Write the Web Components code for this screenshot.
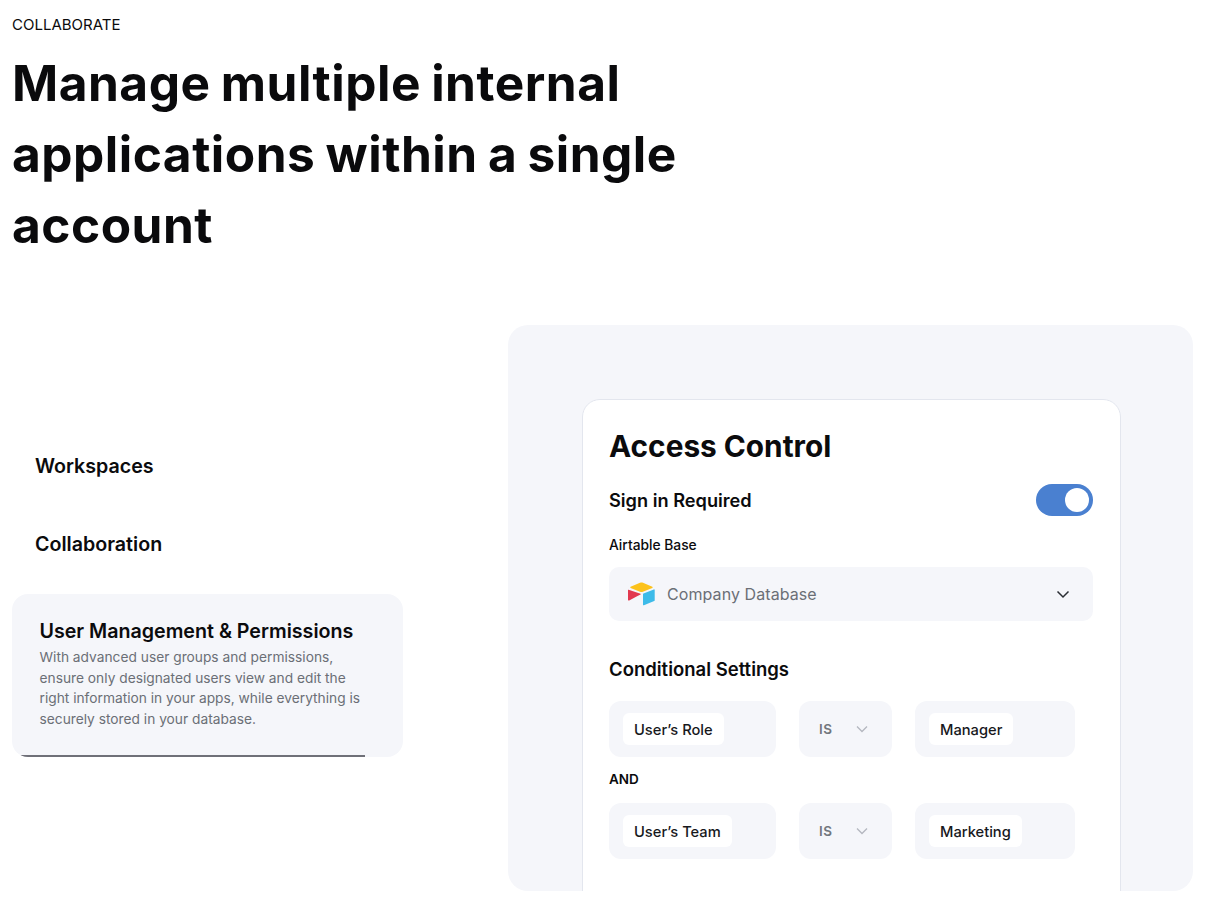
<!DOCTYPE html>
<html lang="en"><head><meta charset="utf-8"><title>Collaborate</title>
<style>
html,body{margin:0;background:#fff;font-family:Inter,"Liberation Sans",sans-serif;color:#0b0b0d}
body{width:1215px;height:901px;overflow:hidden}
</style></head><body>
<feature-page>
  <section-head slot="head" eyebrow="COLLABORATE">Manage multiple internal applications within a single account</section-head>
  <tab-list slot="tabs">
    <tab-item label="Workspaces"></tab-item>
    <tab-item label="Collaboration"></tab-item>
    <tab-item label="User Management &amp; Permissions" active>With advanced user groups and permissions, ensure only designated users view and edit the right information in your apps, while everything is securely stored in your database.</tab-item>
  </tab-list>
  <demo-panel slot="panel">
    <access-card>
      <toggle-row label="Sign in Required"></toggle-row>
      <base-select label="Airtable Base" value="Company Database"></base-select>
      <cond-settings>
        <cond-row field="User’s Role" value="Manager"></cond-row>
        <div class="and" style="font:600 13.5px/20px Inter,sans-serif;margin:12px 0 14px;color:#0b0b0d">AND</div>
        <cond-row field="User’s Team" value="Marketing"></cond-row>
      </cond-settings>
    </access-card>
  </demo-panel>
</feature-page>
<script>
function def(name, html){
  customElements.define(name, class extends HTMLElement{
    connectedCallback(){
      if(this.shadowRoot) return;
      const r=this.attachShadow({mode:'open'});
      const a=n=>(this.getAttribute(n)||'').replace(/&/g,'&amp;');
      r.innerHTML=typeof html==='function'?html(a,this):html;
    }
  });
}
def('feature-page',`<style>
:host{display:block;padding:14px 22px 0 12px}
.row{display:flex;margin-top:64px}
.l{width:391px;padding-top:113px;flex:none}
.r{margin-left:105px;flex:none}
</style><slot name="head"></slot><div class="row"><div class="l"><slot name="tabs"></slot></div><div class="r"><slot name="panel"></slot></div></div>`);
def('section-head',a=>`<style>
:host{display:block}
.e{font:400 15px/22px Inter,sans-serif;color:#0b0b0d}
h1{margin:12px 0 0;font:650 49.600px/71px Inter,sans-serif;letter-spacing:.5px;word-spacing:-2px;width:680px;color:#0a0a0c}
</style><div class="e">${a('eyebrow')}</div><h1><slot></slot></h1>`);
def('tab-list',`<style>:host{display:flex;flex-direction:column;gap:22px}</style><slot></slot>`);
def('tab-item',(a,el)=>{
  const act=el.hasAttribute('active');
  return `<style>
:host{display:block;border-radius:16px;position:relative;overflow:hidden;box-sizing:border-box;${act?'background:#f5f6fa;height:163px;padding:25px 27.5px 0':'height:56px;padding:16px 23px 0'}}
.t{font:600 19.65px/24px Inter,sans-serif;color:#0b0b0d}
.d{font:400 13.75px/20.6px Inter,sans-serif;color:#6b6f76;margin-top:4px}
.bar{position:absolute;left:0;bottom:0;width:353px;height:2px;background:#6f7078}
</style><div class="t">${a('label')}</div>${act?'<div class="d"><slot></slot></div><div class="bar"></div>':''}`});
def('demo-panel',`<style>:host{display:block;box-sizing:border-box;width:685px;height:566px;background:#f5f6fa;border-radius:20px;overflow:hidden;padding:74px 72px 0 74px}</style><slot></slot>`);
def('access-card',`<style>
:host{display:block;box-sizing:border-box;background:#fff;border:1px solid #e3e6ee;border-radius:18px;height:620px;padding:26px 26px 0 26px}
h2{margin:0;font:700 29.8px/40px Inter,sans-serif;color:#0b0b0d}
</style><h2>Access Control</h2><div style="padding-right:1px"><slot></slot></div>`);
def('toggle-row',a=>`<style>
:host{display:flex;justify-content:space-between;align-items:center;margin-top:18px;height:32px}
.t{font:600 18.2px/26px Inter,sans-serif;color:#0b0b0d}
.s{width:57px;height:32px;border-radius:16px;background:#4a80d0;position:relative}
.k{position:absolute;right:4px;top:4px;width:24px;height:24px;border-radius:50%;background:#fff}
</style><span class="t">${a('label')}</span><span class="s"><span class="k"></span></span>`);
def('base-select',a=>`<style>
:host{display:block;margin-top:19px}
.l{font:500 13.8px/20px Inter,sans-serif;color:#0b0b0d}
.b{margin-top:12px;height:54px;border-radius:10px;background:#f5f6fa;display:flex;align-items:center;padding:0 23px 0 19px}
svg.logo{width:27px;height:24px;flex:none}
.v{font:400 16px/24px Inter,sans-serif;color:#6b6f76;margin-left:12px;flex:1;letter-spacing:.08px}
svg.c{width:14px;height:9px}
</style><div class="l">${a('label')}</div><div class="b">
<svg class="logo" viewBox="0 0 27 24"><path d="M12 .8 2.600 4.800c-.5.2-.5.9 0 1.100l9.400 3.900c.9.4 2 .4 2.900 0l9.400-3.900c.5-.2.500-.9 0-1.100L15 .8c-1-.4-2-.4-3 0z" fill="#fcc21b"/><path d="M15 12v10.700c0 .5.500.8.900.6l10.300-4.300c.3-.1.500-.4.500-.6V8c0-.5-.5-.8-.9-.6L15.500 11.400c-.3.100-.5.400-.5.600z" fill="#3dbbe9"/><path d="M12.600 12.500 9.500 14 1.200 18.500c-.4.200-1.200-.1-1.200-.6V8.200c0-.2.100-.3.200-.4.100-.1.200-.1.400 0l11.900 4c.4.100.4.500.1.700z" fill="#e2394f"/></svg>
<span class="v">${a('value')}</span>
<svg class="c" viewBox="0 0 14 9"><path d="M1.500 1.500 7 7l5.500-5.500" fill="none" stroke="#2a2d33" stroke-width="1.500"/></svg></div>`);
def('cond-settings',`<style>
:host{display:block;margin-top:36px}
h3{margin:0 0 20px;font:600 18.500px/24px Inter,sans-serif;color:#0b0b0d}
</style><h3>Conditional Settings</h3><slot></slot>`);
def('cond-row',a=>`<style>
:host{display:flex;gap:23px}
.box{background:#f5f6fa;border-radius:12px;height:56px;box-sizing:border-box;display:flex;align-items:center;padding-left:14px;flex:none}
.a{width:167px}.b{width:93px;padding-left:20px;gap:23px}.d{width:160px}
.chip{background:#fff;border-radius:6px;padding:0 11px;height:32px;font:500 14.7px/34px Inter,sans-serif;color:#17181c}
.is{font:600 13.5px/20px Inter,sans-serif;color:#72767d;letter-spacing:.5px}
svg{width:12px;height:8px}
</style><div class="box a"><span class="chip">${a('field')}</span></div>
<div class="box b"><span class="is">IS</span><svg viewBox="0 0 12 8"><path d="M1 1.500 6 6.500l5-5" fill="none" stroke="#b4b7bf" stroke-width="1.300"/></svg></div>
<div class="box d"><span class="chip">${a('value')}</span></div>`);
</script>
</body></html>
